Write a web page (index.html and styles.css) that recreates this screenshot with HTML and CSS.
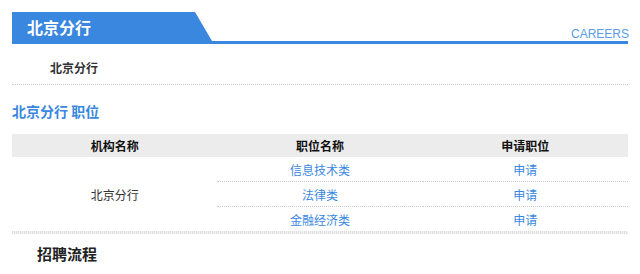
FILE: index.html
```html
<!doctype html>
<html>
	<head>
		<title>北京分行</title>
		<meta charset="utf-8" />
		<meta name="viewport" content="width=device-width, initial-scale=1" />
		<link rel="stylesheet" href="styles.css">
	</head>

	<body>

		<div id="main">

			<div class="title_bar">
				<div class="title_tab">北京分行</div>
				<div class="title_en">CAREERS</div>
			</div>

			<div class="sub_nav">
				<span>北京分行</span>
			</div>

			<h2 class="section_title">北京分行 职位</h2>

			<table class="job_table">
				<thead>
					<tr>
						<th>机构名称</th>
						<th>职位名称</th>
						<th>申请职位</th>
					</tr>
				</thead>
				<tbody>
					<tr>
						<td rowspan="3" class="org">北京分行</td>
						<td class="line"><a href="#">信息技术类</a></td>
						<td class="line"><a href="#">申请</a></td>
					</tr>
					<tr>
						<td class="line"><a href="#">法律类</a></td>
						<td class="line"><a href="#">申请</a></td>
					</tr>
					<tr>
						<td><a href="#">金融经济类</a></td>
						<td><a href="#">申请</a></td>
					</tr>
				</tbody>
			</table>
			<div class="table_end"></div>

			<div class="process">
				<h3 class="process_title">招聘流程</h3>
			</div>

		</div>

	</body>
</html>
```

FILE: styles.css
```css
body {
	margin: 0;
	background-color: #fff;
	font-family: "Noto Sans CJK SC", "Liberation Sans", sans-serif;
	color: #333;
}

#main {
	width: 616px;
	padding: 12px 12px 0 12px;
}

.title_bar {
	display: flex;
	justify-content: space-between;
	align-items: flex-end;
	border-bottom: 3px solid #3a87e0;
	height: 29px;
}

.title_tab {
	width: 185px;
	height: 29px;
	padding-left: 15px;
	background-color: #3a87e0;
	clip-path: polygon(0 0, 183px 0, 200px 100%, 0 100%);
	color: #fff;
	font-size: 16px;
	font-weight: bold;
	line-height: 31px;
}

.title_en {
	font-family: "Liberation Sans", Arial, sans-serif;
	font-size: 12px;
	color: #5a9be6;
	line-height: 12px;
	padding-bottom: 1px;
	margin-right: -1px;
}

.sub_nav {
	height: 36px;
	padding: 4px 0 0 38px;
	border-bottom: 1px dotted #ccc;
	font-size: 12px;
	font-weight: bold;
	line-height: 40px;
	color: #333;
}

.section_title {
	margin: 15px 0 0 0;
	font-size: 14px;
	font-weight: bold;
	color: #3a87e0;
	line-height: 22px;
}

.job_table {
	width: 100%;
	margin-top: 12px;
	border-collapse: collapse;
	table-layout: fixed;
	font-size: 12px;
}

.job_table th {
	height: 23px;
	padding: 0;
	background-color: #ececec;
	font-weight: bold;
	color: #111;
}

.job_table td {
	height: 24px;
	padding: 0;
	text-align: center;
}

.job_table td.line {
	border-bottom: 1px dotted #ccc;
}

.job_table td.org {
	color: #333;
}

.job_table a {
	color: #3a87e0;
	text-decoration: none;
}

.table_end {
	height: 3px;
	background: repeating-linear-gradient(90deg, #ddd 0, #ddd 1px, #f4f4f4 1px, #f4f4f4 2px);
}

.process {
	padding: 8px 0 0 25px;
}

.process_title {
	margin: 0;
	font-size: 15px;
	font-weight: bold;
	color: #222;
	line-height: 24px;
}
```
